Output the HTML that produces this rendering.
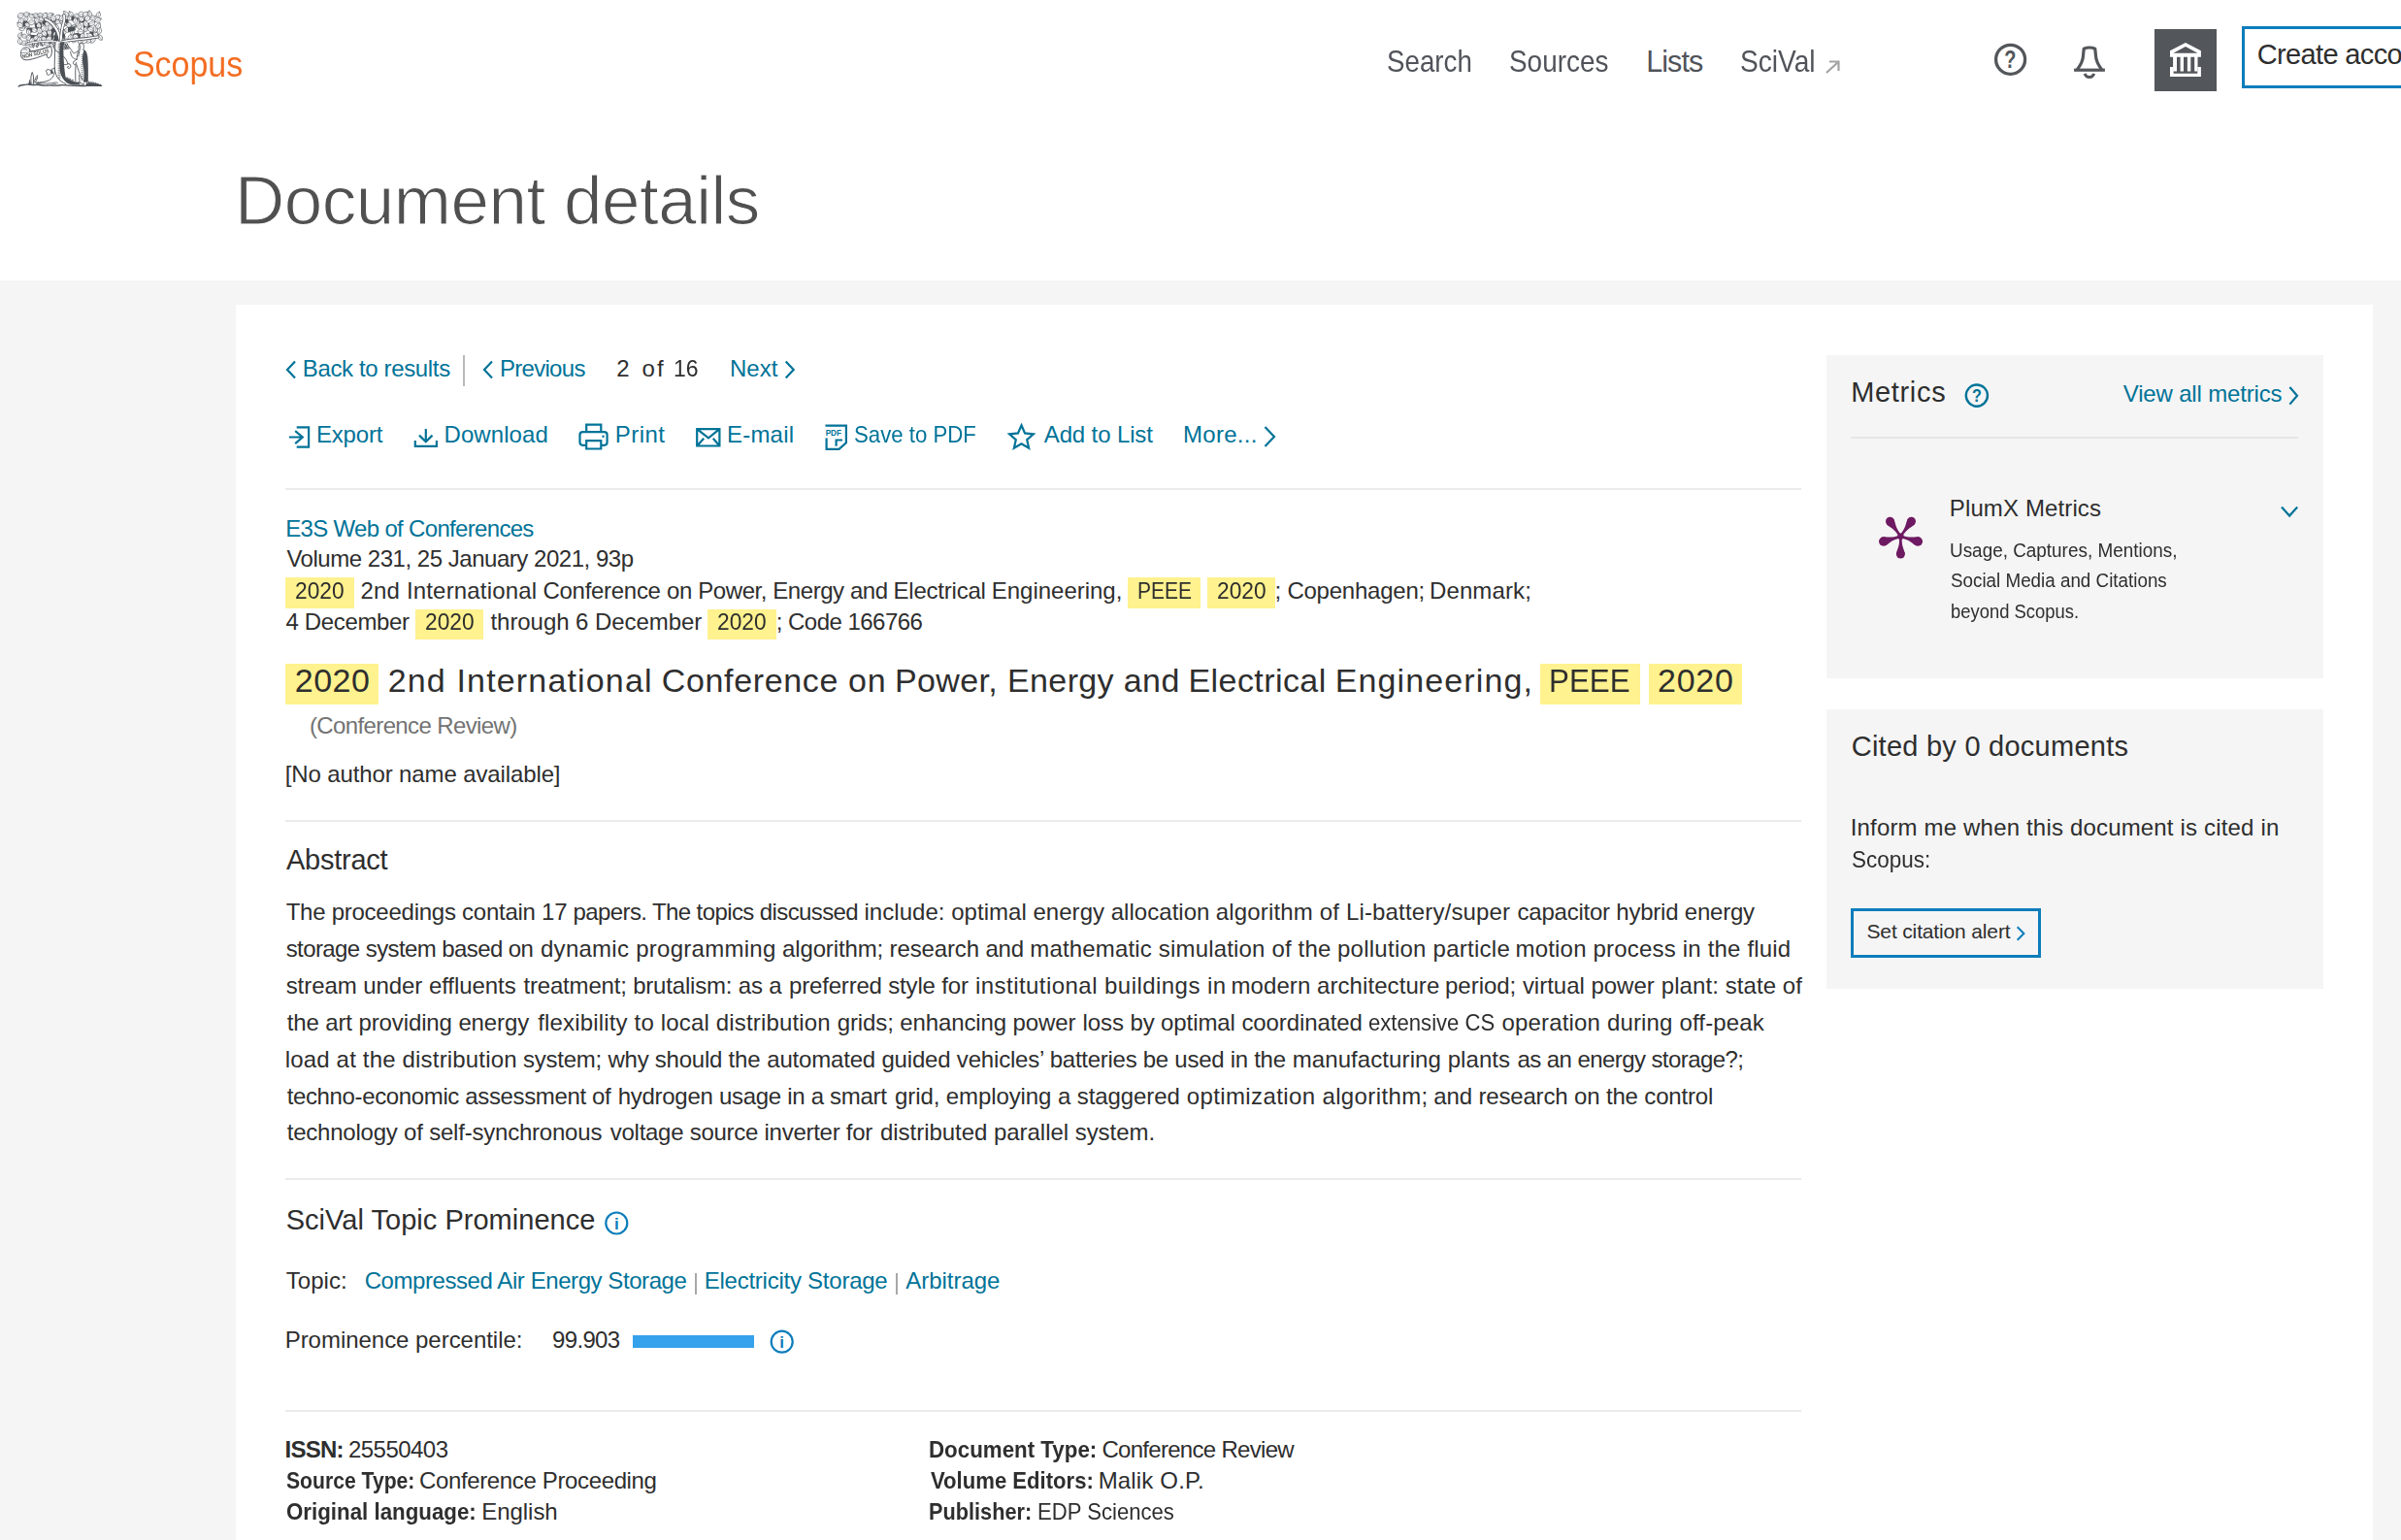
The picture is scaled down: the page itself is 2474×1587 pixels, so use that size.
<!DOCTYPE html>
<html lang="en"><head><meta charset="utf-8"><title>Scopus - Document details</title>
<style>
html,body{margin:0;padding:0}
body{width:2474px;height:1587px;overflow:hidden;background:#f5f5f5;position:relative;font-family:"Liberation Sans",sans-serif}
.r{position:absolute}
.t{position:absolute;white-space:pre;line-height:1;font-family:"Liberation Sans",sans-serif;transform-origin:0 0}
.ov{position:absolute;left:0;top:0}
</style></head><body>
<div class="r" style="left:0.00px;top:0.00px;width:2474.00px;height:289.00px;background:#fff;"></div>
<div class="r" style="left:243.00px;top:314.00px;width:2201.70px;height:1286.00px;background:#fff;"></div>
<div class="r" style="left:1882.20px;top:365.90px;width:511.80px;height:332.70px;background:#f5f5f5;"></div>
<div class="r" style="left:1882.20px;top:730.90px;width:511.80px;height:287.80px;background:#f5f5f5;"></div>
<div class="r" style="left:1907.30px;top:450.00px;width:460.70px;height:2.00px;background:#e6e6e6;"></div>
<div class="r" style="left:294.00px;top:502.75px;width:1562.00px;height:2.00px;background:#ebebeb;"></div>
<div class="r" style="left:294.00px;top:844.70px;width:1562.00px;height:2.00px;background:#ebebeb;"></div>
<div class="r" style="left:294.00px;top:1214.00px;width:1562.00px;height:2.00px;background:#ebebeb;"></div>
<div class="r" style="left:294.00px;top:1452.75px;width:1562.00px;height:2.00px;background:#ebebeb;"></div>
<div class="r" style="left:476.60px;top:366.00px;width:2.00px;height:31.50px;background:#b9b9b9;"></div>
<div class="r" style="left:294.00px;top:595.00px;width:71.00px;height:32.00px;background:#fff28f;"></div>
<div class="r" style="left:1162.00px;top:595.00px;width:74.60px;height:32.00px;background:#fff28f;"></div>
<div class="r" style="left:1243.70px;top:595.00px;width:70.00px;height:32.00px;background:#fff28f;"></div>
<div class="r" style="left:428.00px;top:627.50px;width:70.00px;height:31.50px;background:#fff28f;"></div>
<div class="r" style="left:729.25px;top:627.50px;width:70.75px;height:31.50px;background:#fff28f;"></div>
<div class="r" style="left:294.00px;top:684.00px;width:96.00px;height:41.70px;background:#fff28f;"></div>
<div class="r" style="left:1587.30px;top:684.00px;width:102.70px;height:41.70px;background:#fff28f;"></div>
<div class="r" style="left:1699.30px;top:684.00px;width:95.70px;height:41.70px;background:#fff28f;"></div>
<div class="r" style="left:716.00px;top:1311.50px;width:1.60px;height:22.00px;background:#a8a8a8;"></div>
<div class="r" style="left:923.30px;top:1311.50px;width:1.60px;height:22.00px;background:#a8a8a8;"></div>
<div class="r" style="left:652.30px;top:1376.00px;width:125.00px;height:13.30px;background:#36a2eb;"></div>
<div class="r" style="left:2220.00px;top:30.00px;width:64.00px;height:64.00px;background:#53565a;"></div>
<div class="r" style="left:2310px;top:26.9px;width:300px;height:64.1px;box-sizing:border-box;border:3.2px solid #0c7dbb;background:#fff"></div>
<div class="r" style="left:1907px;top:935.8px;width:196px;height:51px;box-sizing:border-box;border:3.2px solid #0c7dbb;"></div>
<svg class="ov" width="2474" height="1587" viewBox="0 0 2474 1587"><g stroke-linejoin="round" stroke-linecap="round">
<path d="M52 30L58 28L60.5 41L54 42Z" fill="#4b5056" stroke="#4b5056" stroke-width="1.2"/>
<path d="M64.5 30L67 31L66 40L64.5 41Z" fill="#4b5056" stroke="#4b5056" stroke-width="1.2"/>
<path d="M70 27L78 26L77 31L71 32Z" fill="#4b5056" stroke="#4b5056" stroke-width="1.2"/>
<path d="M36 24L42 23L43 29L37 30Z" fill="#4b5056" stroke="#4b5056" stroke-width="1.2"/>
<path d="M86 25L92 24L93 30L87 31Z" fill="#4b5056" stroke="#4b5056" stroke-width="1.2"/>
<path d="M30 36L38 37L37 42L31 41Z" fill="#4b5056" stroke="#4b5056" stroke-width="1.2"/>
<path d="M44 33L49 32L50 38L45 39Z" fill="#4b5056" stroke="#4b5056" stroke-width="1.2"/>
<path d="M76 35L84 34L85 39L77 40Z" fill="#4b5056" stroke="#4b5056" stroke-width="1.2"/>
<path d="M93 33L98 33L98 38L93 38Z" fill="#4b5056" stroke="#4b5056" stroke-width="1.2"/>
<path d="M24 22L28 22L28 27L24 27Z" fill="#4b5056" stroke="#4b5056" stroke-width="1.2"/>
<path d="M55 18L60 18L60 23L55 23Z" fill="#4b5056" stroke="#4b5056" stroke-width="1.2"/>
<path d="M74 17L80 17L80 21L74 21Z" fill="#4b5056" stroke="#4b5056" stroke-width="1.2"/>
<path d="M44 20L49 20L49 25L44 25Z" fill="#4b5056" stroke="#4b5056" stroke-width="1.2"/>
<path d="M82 19L87 19L87 23L82 23Z" fill="#4b5056" stroke="#4b5056" stroke-width="1.2"/>
<path d="M28 29L33 29L33 33L28 33Z" fill="#4b5056" stroke="#4b5056" stroke-width="1.2"/>
<path d="M66 20L70 20L70 25L66 25Z" fill="#4b5056" stroke="#4b5056" stroke-width="1.2"/>
<path d="M73.2 35.4Q68.0 37.3 71.2 41.8Q76.4 39.9 73.2 35.4Z" fill="#fff" stroke="#4b5056" stroke-width="0.62"/><path d="M72.7 37.0L71.6 40.5" fill="none" stroke="#4b5056" stroke-width="0.4"/>
<path d="M26.1 28.8Q21.8 25.1 19.7 30.4Q24.0 34.1 26.1 28.8Z" fill="#fff" stroke="#4b5056" stroke-width="0.62"/><path d="M24.5 29.2L21.0 30.1" fill="none" stroke="#4b5056" stroke-width="0.4"/>
<path d="M96.0 33.2Q95.6 39.4 101.6 38.0Q102.0 31.8 96.0 33.2Z" fill="#fff" stroke="#4b5056" stroke-width="0.62"/><path d="M97.4 34.4L100.5 37.0" fill="none" stroke="#4b5056" stroke-width="0.4"/>
<path d="M98.3 16.8Q93.3 13.8 92.2 19.6Q97.3 22.6 98.3 16.8Z" fill="#fff" stroke="#4b5056" stroke-width="0.62"/><path d="M96.8 17.5L93.4 19.0" fill="none" stroke="#4b5056" stroke-width="0.4"/>
<path d="M62.2 21.2Q57.5 18.5 56.6 23.9Q61.3 26.5 62.2 21.2Z" fill="#fff" stroke="#4b5056" stroke-width="0.62"/><path d="M60.8 21.8L57.7 23.3" fill="none" stroke="#4b5056" stroke-width="0.4"/>
<path d="M68.7 31.7Q63.6 29.0 62.5 34.6Q67.6 37.3 68.7 31.7Z" fill="#fff" stroke="#4b5056" stroke-width="0.62"/><path d="M67.2 32.4L63.8 34.0" fill="none" stroke="#4b5056" stroke-width="0.4"/>
<path d="M21.4 18.0Q16.3 21.8 21.8 25.1Q26.9 21.3 21.4 18.0Z" fill="#fff" stroke="#4b5056" stroke-width="0.62"/><path d="M21.5 19.8L21.7 23.7" fill="none" stroke="#4b5056" stroke-width="0.4"/>
<path d="M46.0 41.8Q39.8 40.6 41.4 46.8Q47.6 47.9 46.0 41.8Z" fill="#fff" stroke="#4b5056" stroke-width="0.62"/><path d="M44.9 43.0L42.3 45.8" fill="none" stroke="#4b5056" stroke-width="0.4"/>
<path d="M85.3 16.8Q79.3 17.7 82.8 22.6Q88.8 21.7 85.3 16.8Z" fill="#fff" stroke="#4b5056" stroke-width="0.62"/><path d="M84.7 18.2L83.3 21.4" fill="none" stroke="#4b5056" stroke-width="0.4"/>
<path d="M72.8 15.6Q67.8 17.2 70.7 21.6Q75.7 20.1 72.8 15.6Z" fill="#fff" stroke="#4b5056" stroke-width="0.62"/><path d="M72.3 17.1L71.1 20.4" fill="none" stroke="#4b5056" stroke-width="0.4"/>
<path d="M20.1 39.5Q15.6 43.6 21.2 46.1Q25.7 42.0 20.1 39.5Z" fill="#fff" stroke="#4b5056" stroke-width="0.62"/><path d="M20.4 41.2L21.0 44.8" fill="none" stroke="#4b5056" stroke-width="0.4"/>
<path d="M35.8 18.4Q34.1 24.1 40.0 24.6Q41.7 18.9 35.8 18.4Z" fill="#fff" stroke="#4b5056" stroke-width="0.62"/><path d="M36.8 19.9L39.2 23.4" fill="none" stroke="#4b5056" stroke-width="0.4"/>
<path d="M36.2 42.3Q32.9 47.1 38.7 47.9Q42.1 43.0 36.2 42.3Z" fill="#fff" stroke="#4b5056" stroke-width="0.62"/><path d="M36.9 43.7L38.2 46.8" fill="none" stroke="#4b5056" stroke-width="0.4"/>
<path d="M97.9 22.2Q92.3 20.3 91.5 26.2Q97.1 28.1 97.9 22.2Z" fill="#fff" stroke="#4b5056" stroke-width="0.62"/><path d="M96.3 23.2L92.8 25.4" fill="none" stroke="#4b5056" stroke-width="0.4"/>
<path d="M50.6 16.0Q45.9 19.8 50.4 23.8Q55.0 20.0 50.6 16.0Z" fill="#fff" stroke="#4b5056" stroke-width="0.62"/><path d="M50.5 18.0L50.4 22.2" fill="none" stroke="#4b5056" stroke-width="0.4"/>
<path d="M29.6 15.2Q30.7 20.7 35.5 18.0Q34.5 12.5 29.6 15.2Z" fill="#fff" stroke="#4b5056" stroke-width="0.62"/><path d="M31.1 15.9L34.4 17.4" fill="none" stroke="#4b5056" stroke-width="0.4"/>
<path d="M43.3 30.9Q41.2 37.2 47.8 37.3Q49.8 31.0 43.3 30.9Z" fill="#fff" stroke="#4b5056" stroke-width="0.62"/><path d="M44.4 32.5L46.9 36.0" fill="none" stroke="#4b5056" stroke-width="0.4"/>
<path d="M22.4 33.7Q16.7 34.2 19.2 39.3Q24.9 38.9 22.4 33.7Z" fill="#fff" stroke="#4b5056" stroke-width="0.62"/><path d="M21.6 35.1L19.8 38.2" fill="none" stroke="#4b5056" stroke-width="0.4"/>
<path d="M50.5 22.1Q45.1 21.9 46.6 27.1Q52.0 27.3 50.5 22.1Z" fill="#fff" stroke="#4b5056" stroke-width="0.62"/><path d="M49.5 23.3L47.4 26.1" fill="none" stroke="#4b5056" stroke-width="0.4"/>
<path d="M89.3 27.2Q84.0 28.9 87.6 33.1Q92.9 31.4 89.3 27.2Z" fill="#fff" stroke="#4b5056" stroke-width="0.62"/><path d="M88.9 28.7L87.9 31.9" fill="none" stroke="#4b5056" stroke-width="0.4"/>
<path d="M82.6 15.7Q78.2 11.9 75.4 17.0Q79.8 20.8 82.6 15.7Z" fill="#fff" stroke="#4b5056" stroke-width="0.62"/><path d="M80.8 16.0L76.8 16.7" fill="none" stroke="#4b5056" stroke-width="0.4"/>
<path d="M102.6 12.3Q97.2 13.5 100.2 18.2Q105.6 17.0 102.6 12.3Z" fill="#fff" stroke="#4b5056" stroke-width="0.62"/><path d="M102.0 13.8L100.7 17.0" fill="none" stroke="#4b5056" stroke-width="0.4"/>
<path d="M84.1 38.4Q77.9 40.1 81.4 45.5Q87.6 43.8 84.1 38.4Z" fill="#fff" stroke="#4b5056" stroke-width="0.62"/><path d="M83.4 40.2L81.9 44.1" fill="none" stroke="#4b5056" stroke-width="0.4"/>
<path d="M49.4 30.1Q46.6 35.3 52.4 36.5Q55.2 31.3 49.4 30.1Z" fill="#fff" stroke="#4b5056" stroke-width="0.62"/><path d="M50.1 31.7L51.8 35.2" fill="none" stroke="#4b5056" stroke-width="0.4"/>
<path d="M24.3 14.1Q18.4 11.5 18.2 18.0Q24.1 20.5 24.3 14.1Z" fill="#fff" stroke="#4b5056" stroke-width="0.62"/><path d="M22.8 15.1L19.4 17.2" fill="none" stroke="#4b5056" stroke-width="0.4"/>
<path d="M39.2 36.7Q33.8 36.1 34.5 41.5Q39.9 42.0 39.2 36.7Z" fill="#fff" stroke="#4b5056" stroke-width="0.62"/><path d="M38.0 37.9L35.4 40.5" fill="none" stroke="#4b5056" stroke-width="0.4"/>
<path d="M67.0 37.9Q61.7 35.8 61.1 41.5Q66.4 43.6 67.0 37.9Z" fill="#fff" stroke="#4b5056" stroke-width="0.62"/><path d="M65.5 38.8L62.3 40.8" fill="none" stroke="#4b5056" stroke-width="0.4"/>
<path d="M31.2 36.0Q25.1 36.1 27.7 41.7Q33.8 41.5 31.2 36.0Z" fill="#fff" stroke="#4b5056" stroke-width="0.62"/><path d="M30.4 37.4L28.4 40.5" fill="none" stroke="#4b5056" stroke-width="0.4"/>
<path d="M25.8 23.5Q25.1 28.7 30.3 27.7Q31.0 22.4 25.8 23.5Z" fill="#fff" stroke="#4b5056" stroke-width="0.62"/><path d="M26.9 24.5L29.4 26.8" fill="none" stroke="#4b5056" stroke-width="0.4"/>
<path d="M52.0 43.6Q47.4 39.9 45.4 45.5Q50.0 49.2 52.0 43.6Z" fill="#fff" stroke="#4b5056" stroke-width="0.62"/><path d="M50.4 44.1L46.7 45.1" fill="none" stroke="#4b5056" stroke-width="0.4"/>
<path d="M62.3 24.0Q64.8 29.6 69.2 25.3Q66.7 19.8 62.3 24.0Z" fill="#fff" stroke="#4b5056" stroke-width="0.62"/><path d="M64.0 24.3L67.8 25.1" fill="none" stroke="#4b5056" stroke-width="0.4"/>
<path d="M28.0 16.5Q22.9 17.9 25.9 22.2Q31.0 20.8 28.0 16.5Z" fill="#fff" stroke="#4b5056" stroke-width="0.62"/><path d="M27.5 17.9L26.4 21.1" fill="none" stroke="#4b5056" stroke-width="0.4"/>
<path d="M103.2 28.2Q97.9 30.9 101.6 35.5Q106.9 32.8 103.2 28.2Z" fill="#fff" stroke="#4b5056" stroke-width="0.62"/><path d="M102.8 30.0L101.9 34.0" fill="none" stroke="#4b5056" stroke-width="0.4"/>
<path d="M57.0 24.6Q54.3 29.7 59.7 31.8Q62.3 26.7 57.0 24.6Z" fill="#fff" stroke="#4b5056" stroke-width="0.62"/><path d="M57.6 26.4L59.1 30.3" fill="none" stroke="#4b5056" stroke-width="0.4"/>
<path d="M28.7 43.3Q23.9 39.9 21.6 45.3Q26.3 48.6 28.7 43.3Z" fill="#fff" stroke="#4b5056" stroke-width="0.62"/><path d="M26.9 43.8L23.0 44.9" fill="none" stroke="#4b5056" stroke-width="0.4"/>
<path d="M92.2 15.9Q85.8 15.5 88.0 21.6Q94.4 22.0 92.2 15.9Z" fill="#fff" stroke="#4b5056" stroke-width="0.62"/><path d="M91.2 17.3L88.8 20.5" fill="none" stroke="#4b5056" stroke-width="0.4"/>
<path d="M34.5 38.6Q28.6 39.9 31.3 45.3Q37.2 44.0 34.5 38.6Z" fill="#fff" stroke="#4b5056" stroke-width="0.62"/><path d="M33.7 40.3L31.9 44.0" fill="none" stroke="#4b5056" stroke-width="0.4"/>
<path d="M46.1 25.6Q40.1 27.7 43.8 32.9Q49.8 30.8 46.1 25.6Z" fill="#fff" stroke="#4b5056" stroke-width="0.62"/><path d="M45.6 27.4L44.3 31.4" fill="none" stroke="#4b5056" stroke-width="0.4"/>
<path d="M53.0 37.7Q47.1 36.3 47.9 42.4Q53.9 43.8 53.0 37.7Z" fill="#fff" stroke="#4b5056" stroke-width="0.62"/><path d="M51.8 38.9L49.0 41.4" fill="none" stroke="#4b5056" stroke-width="0.4"/>
<path d="M86.6 33.9Q80.9 34.9 83.1 40.2Q88.8 39.2 86.6 33.9Z" fill="#fff" stroke="#4b5056" stroke-width="0.62"/><path d="M85.7 35.5L83.8 39.0" fill="none" stroke="#4b5056" stroke-width="0.4"/>
<path d="M73.8 30.2Q70.3 34.2 75.1 36.5Q78.5 32.5 73.8 30.2Z" fill="#fff" stroke="#4b5056" stroke-width="0.62"/><path d="M74.1 31.8L74.8 35.3" fill="none" stroke="#4b5056" stroke-width="0.4"/>
<path d="M38.5 35.1Q39.2 41.3 44.1 37.5Q43.4 31.4 38.5 35.1Z" fill="#fff" stroke="#4b5056" stroke-width="0.62"/><path d="M39.9 35.7L43.0 37.0" fill="none" stroke="#4b5056" stroke-width="0.4"/>
<path d="M89.7 34.5Q89.6 40.9 95.7 39.2Q95.8 32.9 89.7 34.5Z" fill="#fff" stroke="#4b5056" stroke-width="0.62"/><path d="M91.2 35.7L94.5 38.3" fill="none" stroke="#4b5056" stroke-width="0.4"/>
<path d="M97.9 26.2Q93.6 30.5 98.7 33.8Q103.0 29.5 97.9 26.2Z" fill="#fff" stroke="#4b5056" stroke-width="0.62"/><path d="M98.1 28.1L98.5 32.3" fill="none" stroke="#4b5056" stroke-width="0.4"/>
<path d="M75.7 35.6Q74.1 41.5 80.1 40.2Q81.7 34.3 75.7 35.6Z" fill="#fff" stroke="#4b5056" stroke-width="0.62"/><path d="M76.8 36.7L79.2 39.3" fill="none" stroke="#4b5056" stroke-width="0.4"/>
<path d="M78.8 26.5Q73.5 24.0 72.7 29.8Q78.0 32.4 78.8 26.5Z" fill="#fff" stroke="#4b5056" stroke-width="0.62"/><path d="M77.3 27.4L73.9 29.2" fill="none" stroke="#4b5056" stroke-width="0.4"/>
<path d="M56.6 32.6Q52.3 36.4 57.6 38.7Q61.9 34.8 56.6 32.6Z" fill="#fff" stroke="#4b5056" stroke-width="0.62"/><path d="M56.9 34.1L57.4 37.5" fill="none" stroke="#4b5056" stroke-width="0.4"/>
<path d="M55.1 14.2Q49.7 11.4 48.0 17.2Q53.4 20.0 55.1 14.2Z" fill="#fff" stroke="#4b5056" stroke-width="0.62"/><path d="M53.3 14.9L49.4 16.6" fill="none" stroke="#4b5056" stroke-width="0.4"/>
<path d="M67.9 25.8Q70.9 31.0 74.1 26.0Q71.2 20.8 67.9 25.8Z" fill="#fff" stroke="#4b5056" stroke-width="0.62"/><path d="M69.5 25.9L72.9 26.0" fill="none" stroke="#4b5056" stroke-width="0.4"/>
<path d="M29.0 29.8Q24.9 33.5 29.9 36.0Q34.0 32.3 29.0 29.8Z" fill="#fff" stroke="#4b5056" stroke-width="0.62"/><path d="M29.2 31.3L29.7 34.8" fill="none" stroke="#4b5056" stroke-width="0.4"/>
<path d="M53.3 25.4Q47.7 26.5 50.1 31.7Q55.7 30.5 53.3 25.4Z" fill="#fff" stroke="#4b5056" stroke-width="0.62"/><path d="M52.5 26.9L50.7 30.4" fill="none" stroke="#4b5056" stroke-width="0.4"/>
<path d="M102.9 23.8Q96.9 24.5 99.5 29.9Q105.5 29.2 102.9 23.8Z" fill="#fff" stroke="#4b5056" stroke-width="0.62"/><path d="M102.1 25.3L100.2 28.7" fill="none" stroke="#4b5056" stroke-width="0.4"/>
<path d="M53.6 22.0Q51.1 26.7 56.3 27.7Q58.9 23.0 53.6 22.0Z" fill="#fff" stroke="#4b5056" stroke-width="0.62"/><path d="M54.3 23.5L55.8 26.6" fill="none" stroke="#4b5056" stroke-width="0.4"/>
<path d="M40.2 17.7Q40.0 23.3 45.3 21.4Q45.5 15.8 40.2 17.7Z" fill="#fff" stroke="#4b5056" stroke-width="0.62"/><path d="M41.4 18.6L44.2 20.6" fill="none" stroke="#4b5056" stroke-width="0.4"/>
<path d="M22.1 36.1Q23.7 41.2 28.2 38.3Q26.6 33.2 22.1 36.1Z" fill="#fff" stroke="#4b5056" stroke-width="0.62"/><path d="M23.6 36.6L27.0 37.8" fill="none" stroke="#4b5056" stroke-width="0.4"/>
<path d="M65.3 15.6Q59.1 16.3 61.5 22.1Q67.7 21.4 65.3 15.6Z" fill="#fff" stroke="#4b5056" stroke-width="0.62"/><path d="M64.4 17.2L62.3 20.8" fill="none" stroke="#4b5056" stroke-width="0.4"/>
<path d="M39.8 23.1Q35.2 26.8 40.2 30.0Q44.7 26.3 39.8 23.1Z" fill="#fff" stroke="#4b5056" stroke-width="0.62"/><path d="M39.9 24.8L40.1 28.6" fill="none" stroke="#4b5056" stroke-width="0.4"/>
<path d="M89.8 29.8Q92.8 35.1 96.7 30.4Q93.7 25.2 89.8 29.8Z" fill="#fff" stroke="#4b5056" stroke-width="0.62"/><path d="M91.6 30.0L95.4 30.3" fill="none" stroke="#4b5056" stroke-width="0.4"/>
<path d="M81.5 23.7Q77.2 27.9 82.4 31.1Q86.6 26.8 81.5 23.7Z" fill="#fff" stroke="#4b5056" stroke-width="0.62"/><path d="M81.7 25.5L82.2 29.6" fill="none" stroke="#4b5056" stroke-width="0.4"/>
<path d="M33.6 15.0Q36.4 20.1 41.0 16.6Q38.2 11.5 33.6 15.0Z" fill="#fff" stroke="#4b5056" stroke-width="0.62"/><path d="M35.5 15.4L39.5 16.3" fill="none" stroke="#4b5056" stroke-width="0.4"/>
<path d="M86.8 13.7Q82.3 9.4 80.4 15.3Q84.9 19.6 86.8 13.7Z" fill="#fff" stroke="#4b5056" stroke-width="0.62"/><path d="M85.2 14.1L81.7 15.0" fill="none" stroke="#4b5056" stroke-width="0.4"/>
<path d="M61.2 15.5Q55.3 14.2 57.0 20.0Q63.0 21.3 61.2 15.5Z" fill="#fff" stroke="#4b5056" stroke-width="0.62"/><path d="M60.2 16.6L57.9 19.1" fill="none" stroke="#4b5056" stroke-width="0.4"/>
<path d="M56.3 44.4Q51.4 42.6 51.2 47.9Q56.2 49.7 56.3 44.4Z" fill="#fff" stroke="#4b5056" stroke-width="0.62"/><path d="M55.1 45.3L52.3 47.2" fill="none" stroke="#4b5056" stroke-width="0.4"/>
<path d="M48.0 13.3Q41.6 13.1 43.8 19.1Q50.1 19.2 48.0 13.3Z" fill="#fff" stroke="#4b5056" stroke-width="0.62"/><path d="M46.9 14.7L44.6 17.9" fill="none" stroke="#4b5056" stroke-width="0.4"/>
<path d="M32.8 29.3Q32.6 35.3 38.0 32.8Q38.2 26.7 32.8 29.3Z" fill="#fff" stroke="#4b5056" stroke-width="0.62"/><path d="M34.1 30.2L37.0 32.1" fill="none" stroke="#4b5056" stroke-width="0.4"/>
<path d="M87.0 21.1Q84.1 26.5 90.0 28.3Q92.9 22.8 87.0 21.1Z" fill="#fff" stroke="#4b5056" stroke-width="0.62"/><path d="M87.8 22.9L89.4 26.8" fill="none" stroke="#4b5056" stroke-width="0.4"/>
<path d="M86.3 32.2Q82.3 27.2 79.6 33.0Q83.6 37.9 86.3 32.2Z" fill="#fff" stroke="#4b5056" stroke-width="0.62"/><path d="M84.6 32.4L80.9 32.8" fill="none" stroke="#4b5056" stroke-width="0.4"/>
<path d="M104.2 19.1Q98.8 16.0 97.3 22.1Q102.7 25.1 104.2 19.1Z" fill="#fff" stroke="#4b5056" stroke-width="0.62"/><path d="M102.5 19.8L98.7 21.5" fill="none" stroke="#4b5056" stroke-width="0.4"/>
<path d="M36.2 22.3Q31.2 18.1 28.8 24.1Q33.8 28.3 36.2 22.3Z" fill="#fff" stroke="#4b5056" stroke-width="0.62"/><path d="M34.4 22.7L30.3 23.8" fill="none" stroke="#4b5056" stroke-width="0.4"/>
<path d="M77.2 17.7Q73.1 22.2 78.2 25.4Q82.3 20.9 77.2 17.7Z" fill="#fff" stroke="#4b5056" stroke-width="0.62"/><path d="M77.4 19.6L78.0 23.9" fill="none" stroke="#4b5056" stroke-width="0.4"/>
<path d="M94.2 39.9Q88.6 37.9 88.5 43.8Q94.0 45.8 94.2 39.9Z" fill="#fff" stroke="#4b5056" stroke-width="0.62"/><path d="M92.8 40.9L89.6 43.0" fill="none" stroke="#4b5056" stroke-width="0.4"/>
<path d="M101.0 35.7Q99.4 41.2 105.2 41.4Q106.8 35.9 101.0 35.7Z" fill="#fff" stroke="#4b5056" stroke-width="0.62"/><path d="M102.1 37.1L104.4 40.3" fill="none" stroke="#4b5056" stroke-width="0.4"/>
<path d="M38.6 14.9Q41.1 19.5 44.7 15.8Q42.2 11.2 38.6 14.9Z" fill="#fff" stroke="#4b5056" stroke-width="0.62"/><path d="M40.1 15.1L43.5 15.6" fill="none" stroke="#4b5056" stroke-width="0.4"/>
<path d="M56.9 37.0Q51.8 40.1 56.4 44.0Q61.6 40.8 56.9 37.0Z" fill="#fff" stroke="#4b5056" stroke-width="0.62"/><path d="M56.8 38.7L56.5 42.6" fill="none" stroke="#4b5056" stroke-width="0.4"/>
<path d="M65.9 11.6Q64.5 17.2 70.3 17.5Q71.7 11.9 65.9 11.6Z" fill="#fff" stroke="#4b5056" stroke-width="0.62"/><path d="M67.0 13.1L69.4 16.3" fill="none" stroke="#4b5056" stroke-width="0.4"/>
<path d="M90.4 12.3Q84.6 11.3 85.6 17.1Q91.3 18.1 90.4 12.3Z" fill="#fff" stroke="#4b5056" stroke-width="0.62"/><path d="M89.2 13.5L86.5 16.1" fill="none" stroke="#4b5056" stroke-width="0.4"/>
<path d="M35.7 45.1Q30.7 42.0 29.8 47.8Q34.8 51.0 35.7 45.1Z" fill="#fff" stroke="#4b5056" stroke-width="0.62"/><path d="M34.2 45.8L31.0 47.3" fill="none" stroke="#4b5056" stroke-width="0.4"/>
<path d="M66.2 40.0Q66.2 45.5 71.6 44.5Q71.6 39.0 66.2 40.0Z" fill="#fff" stroke="#4b5056" stroke-width="0.62"/><path d="M67.5 41.1L70.5 43.6" fill="none" stroke="#4b5056" stroke-width="0.4"/>
<path d="M30.2 13.8Q25.8 10.1 24.2 15.7Q28.6 19.4 30.2 13.8Z" fill="#fff" stroke="#4b5056" stroke-width="0.62"/><path d="M28.7 14.3L25.4 15.3" fill="none" stroke="#4b5056" stroke-width="0.4"/>
<path d="M39.3 28.3Q36.6 33.5 42.3 34.9Q45.0 29.7 39.3 28.3Z" fill="#fff" stroke="#4b5056" stroke-width="0.62"/><path d="M40.0 29.9L41.7 33.6" fill="none" stroke="#4b5056" stroke-width="0.4"/>
<path d="M98.3 39.4Q92.8 38.6 93.2 44.1Q98.6 44.9 98.3 39.4Z" fill="#fff" stroke="#4b5056" stroke-width="0.62"/><path d="M97.0 40.5L94.2 43.1" fill="none" stroke="#4b5056" stroke-width="0.4"/>
<path d="M43.1 37.6Q41.6 43.1 47.2 42.4Q48.7 36.9 43.1 37.6Z" fill="#fff" stroke="#4b5056" stroke-width="0.62"/><path d="M44.2 38.8L46.4 41.4" fill="none" stroke="#4b5056" stroke-width="0.4"/>
<path d="M40.7 37.8Q35.5 41.2 40.2 45.2Q45.3 41.8 40.7 37.8Z" fill="#fff" stroke="#4b5056" stroke-width="0.62"/><path d="M40.5 39.7L40.3 43.7" fill="none" stroke="#4b5056" stroke-width="0.4"/>
<path d="M73.4 30.6Q69.3 25.8 66.2 31.2Q70.2 36.0 73.4 30.6Z" fill="#fff" stroke="#4b5056" stroke-width="0.62"/><path d="M71.6 30.7L67.6 31.1" fill="none" stroke="#4b5056" stroke-width="0.4"/>
<path d="M71.3 11.9Q69.3 17.0 74.8 17.1Q76.8 12.0 71.3 11.9Z" fill="#fff" stroke="#4b5056" stroke-width="0.62"/><path d="M72.2 13.2L74.1 16.1" fill="none" stroke="#4b5056" stroke-width="0.4"/>
<path d="M57.3 31.9Q59.8 37.6 64.2 33.2Q61.7 27.5 57.3 31.9Z" fill="#fff" stroke="#4b5056" stroke-width="0.62"/><path d="M59.0 32.2L62.9 32.9" fill="none" stroke="#4b5056" stroke-width="0.4"/>
<path d="M72.7 40.5Q73.8 46.2 78.5 42.7Q77.4 36.9 72.7 40.5Z" fill="#fff" stroke="#4b5056" stroke-width="0.62"/><path d="M74.2 41.0L77.3 42.2" fill="none" stroke="#4b5056" stroke-width="0.4"/>
<path d="M18.1 23.3Q16.8 29.6 23.2 28.6Q24.4 22.2 18.1 23.3Z" fill="#fff" stroke="#4b5056" stroke-width="0.62"/><path d="M19.3 24.6L22.2 27.5" fill="none" stroke="#4b5056" stroke-width="0.4"/>
<path d="M90.1 40.0Q84.3 38.0 83.9 44.2Q89.8 46.1 90.1 40.0Z" fill="#fff" stroke="#4b5056" stroke-width="0.62"/><path d="M88.6 41.0L85.2 43.3" fill="none" stroke="#4b5056" stroke-width="0.4"/>
<path d="M92.0 11.1Q88.6 15.4 93.5 17.9Q96.9 13.6 92.0 11.1Z" fill="#fff" stroke="#4b5056" stroke-width="0.62"/><path d="M92.4 12.8L93.2 16.6" fill="none" stroke="#4b5056" stroke-width="0.4"/>
<path d="M53.6 15.2Q50.4 20.5 56.3 22.3Q59.5 17.0 53.6 15.2Z" fill="#fff" stroke="#4b5056" stroke-width="0.62"/><path d="M54.2 17.0L55.8 20.9" fill="none" stroke="#4b5056" stroke-width="0.4"/>
<path d="M62 46C62 38 60 32 56 27C53 23 50 21 47 20" fill="none" stroke="#4b5056" stroke-width="3.6"/><path d="M62 46C62 38 60 32 56 27C53 23 50 21 47 20" fill="none" stroke="#fff" stroke-width="2.2"/>
<path d="M62.5 44C63 36 64 28 66 22C66.5 20 66.5 18 66 16" fill="none" stroke="#4b5056" stroke-width="3.4"/><path d="M62.5 44C63 36 64 28 66 22C66.5 20 66.5 18 66 16" fill="none" stroke="#fff" stroke-width="2.0"/>
<path d="M64 43C72 41 86 40.5 101 38" fill="none" stroke="#4b5056" stroke-width="3.0"/><path d="M64 43C72 41 86 40.5 101 38" fill="none" stroke="#fff" stroke-width="1.6"/>
<path d="M58 42C50 42 38 42 27 45.5" fill="none" stroke="#4b5056" stroke-width="2.7"/><path d="M58 42C50 42 38 42 27 45.5" fill="none" stroke="#fff" stroke-width="1.3"/>
<path d="M57.5 32L60.5 42L55 42Z" fill="#4b5056"/>
<path d="M64.5 30L67 38L64.5 41Z" fill="#4b5056"/>
<path d="M70 28L78 27L76 32L70 33Z" fill="#4b5056"/>
<path d="M57.5 43C56.5 50 56.5 58 56.2 67C56.3 72 56.5 76 58 79C60.5 83 64 85.5 67.6 86.5L74 87L74 44Z" fill="#fff"/>
<path d="M57 44C56.3 52 56.6 60 56.2 67.5C56.2 72 57 76 59 79.5C61.5 83 64.5 85.3 67.8 86.4" fill="none" stroke="#4b5056" stroke-width="0.9"/>
<path d="M61.8 43.5C61.1 52 61.2 62 61.4 70C61.8 76 63.6 80 66.4 83C69 86 72 87.2 75 87.4L83 87.5L82 84.4L78 84.4L74 83L70 81.2L67.8 80.6C66.2 72 65.4 60 65.4 52C65.5 48 65.9 45.5 66.6 43Z" fill="#4b5056"/>
<path d="M62 45.0L60 45.2M62 46.7L60 46.9M62 48.4L60 48.6M62 50.1L60 50.3M62 51.8L60 52.0M62 53.5L60 53.7M62 55.2L60 55.4M62 56.9L60 57.1M62 58.6L60 58.8M62 60.3L60 60.5M62 62.0L60 62.2M62 63.7L60 63.9M62 65.4L60 65.6M62 67.1L60 67.3M62 68.8L60 69.0M62 70.5L60 70.7M62 72.2L60 72.4M62 73.9L60 74.1M62 75.6L60 75.8M62 77.3L60 77.5M62 79.0L60 79.2M62 80.7L60 80.9" fill="none" stroke="#4b5056" stroke-width="0.6"/>
<path d="M67.5 81L68 78.5L68.8 81L69.5 79L70.2 81.5L71 79.5L71.8 82L72.8 80.5L73.5 82.5L75 81.5L76 83Z" fill="#4b5056"/>
<path d="M55.5 46.5C55 49 56 51 58 52.5C62 55 65 57 67 60C69 62.5 69.5 64.5 69.8 66C71.5 65 73 66.5 72.8 68.5C72.5 70.5 70.5 71 69.6 69.8C69.2 69 69.8 68.2 70.6 68.6" fill="none" stroke="#4b5056" stroke-width="0.9"/>
<path d="M66 66.5C67.5 66.8 68.8 66.6 69.8 66" fill="none" stroke="#4b5056" stroke-width="0.8"/>
<path d="M50 44.5C52 44 54.5 44.5 55.5 46.5" fill="none" stroke="#4b5056" stroke-width="0.9"/>
<path d="M56.4 70C57 76 55 80 50.5 82.8C46.5 84.5 41 85 37 85.3" fill="none" stroke="#4b5056" stroke-width="0.9"/>
<path d="M55.8 70.5C54 71 52.5 71.5 52 72.5C50 71 47.5 71.5 47.3 73.5C48.5 74 48.6 75 48.2 76.5C49.5 78 51.5 77 52.5 75.5C53.5 76.5 54.5 76 54.6 74.5" fill="#fff" stroke="#4b5056" stroke-width="0.9"/>
<path d="M52 72.5L54.2 72L54.5 76L52.4 75.6Z" fill="#4b5056"/>
<path d="M21.6 54.5C21.2 51.5 23.5 49 27 48.8C29.5 48.8 30.8 50.5 30.8 53C38 52.5 45 50 50.4 47.9C52.5 48 53.6 50 53.4 53C53.2 56.5 52.5 58.5 50.8 59.6C49.5 60.3 48.3 59.3 48.4 57.8L48.5 55.8C42 58 35 61 28.5 61.8C25 62 22.3 61 21.8 58.5Z" fill="#fff" stroke="#4b5056" stroke-width="0.95"/>
<path d="M22.5 54.5C29 54.5 40 52 50.6 48.6" fill="none" stroke="#4b5056" stroke-width="0.6"/>
<path d="M24.5 51.2C25.5 50.3 27.5 50.4 28 51.6M30.8 53L30.8 50.5" fill="none" stroke="#4b5056" stroke-width="0.8"/>
<g style="filter:grayscale(1)"><text x="23.4" y="60.2" font-family="Liberation Sans,sans-serif" font-size="5.6" font-weight="bold" fill="#4b5056" opacity="0.999" transform="rotate(-12.5 23.4 60.2)" textLength="28.2" lengthAdjust="spacingAndGlyphs">NON SOLUS</text></g>
<path d="M33.3 45.2Q31.9 48.0 34.7 49.2Q36.1 46.4 33.3 45.2Z" fill="#fff" stroke="#4b5056" stroke-width="0.8"/><path d="M33.6 46.2L34.4 48.4" fill="none" stroke="#4b5056" stroke-width="0.4"/>
<path d="M38.9 44.9Q36.3 46.6 38.1 49.1Q40.7 47.4 38.9 44.9Z" fill="#fff" stroke="#4b5056" stroke-width="0.8"/><path d="M38.7 46.0L38.3 48.2" fill="none" stroke="#4b5056" stroke-width="0.4"/>
<path d="M42.0 44.3Q41.3 47.0 44.0 47.7Q44.7 45.0 42.0 44.3Z" fill="#fff" stroke="#4b5056" stroke-width="0.8"/><path d="M42.5 45.1L43.6 47.0" fill="none" stroke="#4b5056" stroke-width="0.4"/>
<path d="M86.6 51C88.2 51.5 89.6 54 90.2 58C90.9 64 91 74 90.8 84.8L86 84.8C87 78 86.6 72 85.4 66C84.6 62 84.8 56 86.6 51Z" fill="#4b5056"/>
<path d="M85.6 56.0L83.8 56.7M85.7 58.0L83.9 58.7M85.8 60.0L84.0 60.7M85.8 62.0L84.0 62.7M85.9 64.0L84.1 64.7M85.5 66.0L83.7 66.7M85.5 68.0L83.7 68.7M85.6 70.0L83.8 70.7M85.7 72.0L83.9 72.7M85.7 74.0L83.9 74.7M85.8 76.0L84.0 76.7M85.9 78.0L84.1 78.7M85.9 80.0L84.1 80.7M86.0 82.0L84.2 82.7" fill="none" stroke="#4b5056" stroke-width="0.6"/>
<g fill="none" stroke="#4b5056" stroke-width="0.85">
<path d="M81.6 46.4C82 44 85 43.6 86 45.8C86.8 47.8 86.4 50 85.6 51.6"/>
<path d="M81.6 46.4C81 47.6 81.4 48.6 80.6 49.2C81.6 49.6 81.4 50.8 80.6 52.4C80 54.6 79.6 57 79.2 59.4"/>
<path d="M83 47C82.4 50 81.6 54 80.8 58"/>
<path d="M80 52.8C78 54 76.4 55.4 75.6 54.6C74 52.4 72.6 50 71.4 48.6"/>
<path d="M72.6 53.5C73 56 73.8 58.5 75.6 60C77 61 78.6 61.4 79.6 61.2"/>
<path d="M79.4 60C78.6 61.6 78 62.6 77 62.8C75.4 63 74.8 65 76 66.2C77.2 67 78.6 66.2 78.6 64.6"/>
<path d="M78.6 66C80 70 82 76 84.6 82"/>
<path d="M78 67C77.6 72 77.6 78 77.8 83.6M81.6 77.5C81.6 80 81.8 82 82 84"/>
<path d="M82 85.4C83 86 85.6 86 87 86.6C86.4 88 83.4 88.2 81.6 87.6C81 87 81.2 86 82 85.4Z" fill="#fff"/>
</g>
<g fill="#fff" stroke="#4b5056" stroke-width="0.7">
<circle cx="66.8" cy="46.2" r="1.05"/>
<circle cx="68.6" cy="45.6" r="1.05"/>
<circle cx="67.4" cy="48" r="1.05"/>
<circle cx="69.4" cy="47.6" r="1.05"/>
<circle cx="68.2" cy="49.8" r="1.05"/>
<circle cx="70.2" cy="49.4" r="1.05"/>
<circle cx="66.4" cy="49.8" r="1.05"/>
</g>
<path d="M67 45L69.6 50M69.8 45.4L66.6 50.2" fill="none" stroke="#4b5056" stroke-width="0.6"/>
<path d="M19.2 89C21 87 24 87.8 27 87.2C30 86.2 33 88 36 87.6C40 87 44 88.4 48 88C52 87.2 56 88.8 60 88C64 87 68 88 72 88.2C78 88.6 84 89 90 88.4C95 88 100 87.4 104.6 88.4" fill="none" stroke="#4b5056" stroke-width="1.3"/>
<path d="M37 86C42 85.4 47 86.4 52 85.8C54 85.6 56 86.2 58 87" fill="none" stroke="#4b5056" stroke-width="0.8"/>
<path d="M54 85.8C56 84.6 58.6 84.6 59.6 85.6" fill="none" stroke="#4b5056" stroke-width="0.8"/>
<path d="M88 88.8L89.6 84.6L90.4 86L91.3 83.2L92.2 85.6L93.1 83.4L94 85.8L95 83.6L95.9 86L96.9 84L97.8 86.2L98.9 84.6L99.8 86.6L101 85.4L102 87L103.2 86.4L104.6 88.2L104.6 89Z" fill="#4b5056"/>
<path d="M29 87.4L30.6 81.6L32.2 87.4Z" fill="#4b5056"/>
<path d="M32.2 86.5C31.4 82 31.8 77.5 33.2 74.4C34.8 77.5 35 82 34.2 86.5" fill="#fff" stroke="#4b5056" stroke-width="0.9"/>
<path d="M34.6 86.8L33.6 81.2L35.6 86.8Z" fill="#4b5056"/>
<path d="M35.6 84.5C36 81.5 37 79 38.6 77.6C38.8 80 38 82.5 36.6 84.8" fill="#fff" stroke="#4b5056" stroke-width="0.8"/>
<path d="M36 82L38.4 80.6M38.5 86.4L39 84.6L39.6 86.4L40.2 85L40.8 86.6L42 85.6" fill="none" stroke="#4b5056" stroke-width="0.7"/>
</g>
<path d="M304 372.5L296 381.0L304 389.5" fill="none" stroke="#007398" stroke-width="2.2"/>
<path d="M507 372.5L499 381.0L507 389.5" fill="none" stroke="#007398" stroke-width="2.2"/>
<path d="M809.7 372.5L817.7 381.0L809.7 389.5" fill="none" stroke="#007398" stroke-width="2.2"/>
<path d="M1303.5 440L1313 450.0L1303.5 460" fill="none" stroke="#007398" stroke-width="2.2"/>
<path d="M2359.4 399L2367 407.8L2359.4 416.6" fill="none" stroke="#007398" stroke-width="2.2"/>
<path d="M2351 522.5L2359.1 531.5L2367.2 522.5" fill="none" stroke="#007398" stroke-width="2.2"/>
<path d="M2078.7 955.3L2085.4 962.05L2078.7 968.8" fill="none" stroke="#0c7dbb" stroke-width="2"/>
<path d="M1882 75L1894.5 63.5M1885 63.5L1894.5 63.5L1894.5 73" fill="none" stroke="#a3a3a3" stroke-width="2.2"/>
<circle cx="2071.6" cy="61.3" r="15" fill="none" stroke="#53565a" stroke-width="3.3"/>
<text x="0" y="70" text-anchor="middle" transform="translate(2071.4 0) scale(0.78 1)" font-family="Liberation Sans,sans-serif" font-weight="bold" font-size="25.5" fill="#53565a">?</text>
<path d="M2138.7 72.2L2167.3 72.2" fill="none" stroke="#53565a" stroke-width="3.2" stroke-linecap="square"/>
<path d="M2140.4 71.8C2144.2 66.5 2146.4 62.5 2146.5 57.5L2147.2 50.3Q2153 47.7 2158.8 50.3L2159.5 57.5C2159.6 62.5 2161.8 66.5 2165.6 71.8" fill="none" stroke="#53565a" stroke-width="3.2" stroke-linejoin="round"/>
<path d="M2148.2 75.8C2149.5 80.7 2156.3 80.7 2157.6 75.8" fill="none" stroke="#53565a" stroke-width="3"/>
<path fill-rule="evenodd" fill="#fff" d="M2236 52.2L2252 43.9L2267.9 52.2L2267.9 58.7L2236 58.7Z M2239.4 54.8L2252 48L2264.5 54.8Z"/>
<rect x="2239.1" y="58" width="3.9" height="15.5" fill="#fff"/>
<rect x="2246.6" y="58" width="3.4" height="15.5" fill="#fff"/>
<rect x="2253.9" y="58" width="3.4" height="15.5" fill="#fff"/>
<rect x="2261.2" y="58" width="3.3" height="15.5" fill="#fff"/>
<path fill-rule="evenodd" fill="#fff" d="M2236 69.1L2239.5 69.1L2239.5 73L2264.5 73L2264.5 69.1L2267.9 69.1L2267.9 79L2236 79Z M2239.6 73L2264.3 73L2264.3 75.8L2239.6 75.8Z"/>
<path d="M305.7 440.3L318.1 440.3L318.1 460.6L305.7 460.6M297.9 450.5L312 450.5M304.2 444.1L311.8 450.5L304.2 457.2" fill="none" stroke="#007398" stroke-width="2.2"/>
<path d="M438.8 441.9L438.8 455M432 448.6L438.8 455.2L445.5 448.6M427.8 453.9L427.8 459.8L449.9 459.8L449.9 453.9" fill="none" stroke="#007398" stroke-width="2.2"/>
<path d="M604.2 445L604.2 437.7L619.3 437.7L619.3 445M603.5 458.8L600.5 458.8Q597.5 458.8 597.5 455.8L597.5 448.2Q597.5 445.2 600.5 445.2L622.6 445.2Q625.6 445.2 625.6 448.2L625.6 455.8Q625.6 458.8 622.6 458.8L620 458.8M604.2 454.2L619.3 454.2L619.3 462.5L604.2 462.5Z" fill="none" stroke="#007398" stroke-width="2.2"/>
<circle cx="621.5" cy="449.7" r="1.2" fill="#007398"/>
<path d="M718.2 442.2L741.4 442.2L741.4 459.5L718.2 459.5ZM718.2 442.2L730 451.4L741.4 442.2M718.5 459.3L725.2 451.8M741.2 459.3L734.8 451.8" fill="none" stroke="#007398" stroke-width="2.2" stroke-linejoin="miter"/>
<path d="M850.5 438.6L871.9 438.6L871.9 456.3L864.5 462.9L851.6 462.9L851.6 451.5M861.6 459.8L861.6 453.5L868 453.5" fill="none" stroke="#007398" stroke-width="2.2"/>
<text x="850.7" y="448.8" font-family="Liberation Sans,sans-serif" font-weight="bold" font-size="8.8" fill="#007398" textLength="16.3" lengthAdjust="spacingAndGlyphs">PDF</text>
<path d="M1052.50 438.30L1056.03 446.45L1064.86 447.28L1058.21 453.15L1060.14 461.82L1052.50 457.30L1044.86 461.82L1046.79 453.15L1040.14 447.28L1048.97 446.45Z" fill="none" stroke="#007398" stroke-width="2.2" stroke-linejoin="miter"/>
<circle cx="635.3" cy="1260.5" r="11" fill="none" stroke="#0c7dbb" stroke-width="2.2"/><text x="635.3" y="1266.9" text-anchor="middle" font-family="Liberation Sans,sans-serif" font-weight="bold" font-size="17" fill="#0c7dbb">i</text>
<circle cx="805.7" cy="1382.7" r="11" fill="none" stroke="#0c7dbb" stroke-width="2.2"/><text x="805.7" y="1389.1000000000001" text-anchor="middle" font-family="Liberation Sans,sans-serif" font-weight="bold" font-size="17" fill="#0c7dbb">i</text>
<circle cx="2036.9" cy="407.6" r="11.1" fill="none" stroke="#007398" stroke-width="2.4"/>
<text x="0" y="413.7" text-anchor="middle" transform="translate(2036.9 0) scale(0.9 1)" font-family="Liberation Sans,sans-serif" font-weight="bold" font-size="18" fill="#007398">?</text>
<circle cx="1947.5" cy="537.3" r="4.5" fill="#6e1a62"/>
<path d="M1959.62 551.83C1952.09 542.83 1953.87 539.68 1951.17 534.70L1943.83 539.90C1947.63 544.10 1951.19 543.47 1957.18 553.57Z" fill="#6e1a62"/>
<circle cx="1969.5" cy="537.3" r="4.5" fill="#6e1a62"/>
<path d="M1959.62 553.58C1965.73 543.47 1969.31 544.10 1973.15 539.93L1965.85 534.67C1963.11 539.63 1964.84 542.83 1957.18 551.82Z" fill="#6e1a62"/>
<circle cx="1940.7" cy="558" r="4.7" fill="#6e1a62"/>
<path d="M1957.97 551.26C1947.27 555.46 1945.18 552.49 1939.35 553.50L1942.05 562.50C1947.47 560.14 1947.58 556.51 1958.83 554.14Z" fill="#6e1a62"/>
<circle cx="1976.4" cy="558" r="4.7" fill="#6e1a62"/>
<path d="M1957.98 554.14C1969.40 556.51 1969.64 560.17 1975.07 562.51L1977.73 553.49C1971.89 552.51 1969.72 555.46 1958.82 551.26Z" fill="#6e1a62"/>
<circle cx="1958.4" cy="571.1" r="4.5" fill="#6e1a62"/>
<path d="M1956.90 552.70C1957.85 564.11 1954.58 565.48 1953.90 571.10L1962.90 571.10C1962.23 565.48 1958.95 564.11 1959.90 552.70Z" fill="#6e1a62"/>
<circle cx="1958.4" cy="552.7" r="3.2" fill="#6e1a62"/></svg>
<span class="t" style="left:137.17px;top:48.00px;font-size:37px;color:#f36d21;transform:scaleX(0.9167);">Scopus</span>
<span class="t" style="left:1429.18px;top:48.00px;font-size:30.5px;color:#505359;transform:scaleX(0.9086);">Search</span>
<span class="t" style="left:1555.17px;top:48.00px;font-size:30.5px;color:#505359;transform:scaleX(0.9151);">Sources</span>
<span class="t" style="left:1696.25px;top:48.00px;font-size:30.5px;color:#505359;letter-spacing:-0.938px;">Lists</span>
<span class="t" style="left:1793.16px;top:48.00px;font-size:30.5px;color:#505359;transform:scaleX(0.9219);">SciVal</span>
<span class="t" style="left:2325.70px;top:42.00px;font-size:29px;color:#2e2e2e;letter-spacing:-0.633px;">Create account</span>
<span class="t" style="left:242.00px;top:171.00px;font-size:71px;color:#505050;letter-spacing:-0.483px;-webkit-text-stroke:1.1px #fff;">Document details</span>
<span class="t" style="left:311.75px;top:368.00px;font-size:24px;color:#007398;letter-spacing:-0.357px;">Back to results</span>
<span class="t" style="left:515.00px;top:368.00px;font-size:24px;color:#007398;letter-spacing:-0.714px;">Previous</span>
<span class="t" style="left:635.25px;top:368.00px;font-size:24px;color:#2e2e2e;">2</span>
<span class="t" style="left:661.50px;top:368.00px;font-size:24px;color:#2e2e2e;letter-spacing:2.250px;">of</span>
<span class="t" style="left:694.33px;top:368.00px;font-size:24px;color:#2e2e2e;transform:scaleX(0.9583);">16</span>
<span class="t" style="left:752.00px;top:368.00px;font-size:24px;color:#007398;">Next</span>
<span class="t" style="left:326.00px;top:436.00px;font-size:24px;color:#007398;letter-spacing:-0.200px;">Export</span>
<span class="t" style="left:457.50px;top:436.00px;font-size:24px;color:#007398;letter-spacing:0.071px;">Download</span>
<span class="t" style="left:633.75px;top:436.00px;font-size:24px;color:#007398;letter-spacing:0.438px;">Print</span>
<span class="t" style="left:749.00px;top:436.00px;font-size:24px;color:#007398;letter-spacing:0.200px;">E-mail</span>
<span class="t" style="left:880.07px;top:436.00px;font-size:24px;color:#007398;transform:scaleX(0.9254);">Save to PDF</span>
<span class="t" style="left:1075.75px;top:436.00px;font-size:24px;color:#007398;letter-spacing:-0.125px;">Add to List</span>
<span class="t" style="left:1219.00px;top:436.00px;font-size:24px;color:#007398;letter-spacing:0.292px;">More...</span>
<span class="t" style="left:294.25px;top:533.00px;font-size:24px;color:#007398;letter-spacing:-0.679px;">E3S Web of Conferences</span>
<span class="t" style="left:295.40px;top:564.00px;font-size:24px;color:#2e2e2e;letter-spacing:-0.473px;">Volume 231, 25 January 2021, 93p</span>
<span class="t" style="left:304.05px;top:597.00px;font-size:24px;color:#2e2e2e;transform:scaleX(0.9471);">2020</span>
<span class="t" style="left:371.50px;top:597.00px;font-size:24px;color:#2e2e2e;letter-spacing:0.175px;">2nd International</span>
<span class="t" style="left:559.50px;top:597.00px;font-size:24px;color:#2e2e2e;letter-spacing:-0.292px;">Conference on</span>
<span class="t" style="left:719.25px;top:597.00px;font-size:24px;color:#2e2e2e;letter-spacing:-0.434px;">Power, Energy and</span>
<span class="t" style="left:920.50px;top:597.00px;font-size:24px;color:#2e2e2e;letter-spacing:-0.222px;">Electrical</span>
<span class="t" style="left:1021.75px;top:597.00px;font-size:24px;color:#2e2e2e;letter-spacing:-0.014px;">Engineering,</span>
<span class="t" style="left:1171.65px;top:597.00px;font-size:24px;color:#2e2e2e;transform:scaleX(0.8754);">PEEE</span>
<span class="t" style="left:1253.55px;top:597.00px;font-size:24px;color:#2e2e2e;transform:scaleX(0.9481);">2020</span>
<span class="t" style="left:1313.50px;top:597.00px;font-size:24px;color:#2e2e2e;letter-spacing:-0.225px;">; Copenhagen;</span>
<span class="t" style="left:1473.00px;top:597.00px;font-size:24px;color:#2e2e2e;letter-spacing:0.114px;">Denmark;</span>
<span class="t" style="left:294.50px;top:629.00px;font-size:24px;color:#2e2e2e;letter-spacing:-0.361px;">4 December</span>
<span class="t" style="left:437.80px;top:629.00px;font-size:24px;color:#2e2e2e;transform:scaleX(0.9471);">2020</span>
<span class="t" style="left:505.50px;top:629.00px;font-size:24px;color:#2e2e2e;letter-spacing:-0.059px;">through 6 December</span>
<span class="t" style="left:739.05px;top:629.00px;font-size:24px;color:#2e2e2e;transform:scaleX(0.9471);">2020</span>
<span class="t" style="left:799.75px;top:629.00px;font-size:24px;color:#2e2e2e;letter-spacing:-0.529px;">; Code 166766</span>
<span class="t" style="left:303.70px;top:684.00px;font-size:34px;color:#2e2e2e;letter-spacing:0.533px;">2020</span>
<span class="t" style="left:399.70px;top:684.00px;font-size:34px;color:#2e2e2e;letter-spacing:1.159px;">2nd International</span>
<span class="t" style="left:681.75px;top:684.00px;font-size:34px;color:#2e2e2e;letter-spacing:0.646px;">Conference on</span>
<span class="t" style="left:922.00px;top:684.00px;font-size:34px;color:#2e2e2e;letter-spacing:0.375px;">Power, Energy and</span>
<span class="t" style="left:1224.50px;top:684.00px;font-size:34px;color:#2e2e2e;letter-spacing:0.417px;">Electrical</span>
<span class="t" style="left:1375.75px;top:684.00px;font-size:34px;color:#2e2e2e;letter-spacing:1.114px;">Engineering,</span>
<span class="t" style="left:1596.23px;top:684.00px;font-size:34px;color:#2e2e2e;transform:scaleX(0.9221);">PEEE</span>
<span class="t" style="left:1708.00px;top:684.00px;font-size:34px;color:#2e2e2e;letter-spacing:0.767px;">2020</span>
<span class="t" style="left:319.00px;top:736.00px;font-size:24px;color:#737373;letter-spacing:-0.628px;">(Conference Review)</span>
<span class="t" style="left:293.70px;top:786.00px;font-size:24px;color:#2e2e2e;letter-spacing:-0.120px;">[No author name available]</span>
<span class="t" style="left:295.00px;top:872.00px;font-size:29px;color:#2e2e2e;letter-spacing:-0.243px;">Abstract</span>
<span class="t" style="left:294.70px;top:928.00px;font-size:24px;color:#2e2e2e;letter-spacing:-0.256px;">The proceedings contain 17</span>
<span class="t" style="left:590.50px;top:928.00px;font-size:24px;color:#2e2e2e;letter-spacing:-0.600px;">papers. The topics discussed</span>
<span class="t" style="left:890.50px;top:928.00px;font-size:24px;color:#2e2e2e;letter-spacing:0.032px;">include: optimal energy allocation</span>
<span class="t" style="left:1252.75px;top:928.00px;font-size:24px;color:#2e2e2e;letter-spacing:0.162px;">algorithm of Li-battery/super</span>
<span class="t" style="left:1563.50px;top:928.00px;font-size:24px;color:#2e2e2e;letter-spacing:-0.223px;">capacitor hybrid energy</span>
<span class="t" style="left:294.70px;top:966.00px;font-size:24px;color:#2e2e2e;letter-spacing:-0.586px;">storage system based on</span>
<span class="t" style="left:557.00px;top:966.00px;font-size:24px;color:#2e2e2e;letter-spacing:0.267px;">dynamic programming</span>
<span class="t" style="left:806.00px;top:966.00px;font-size:24px;color:#2e2e2e;letter-spacing:-0.134px;">algorithm; research and</span>
<span class="t" style="left:1061.25px;top:966.00px;font-size:24px;color:#2e2e2e;letter-spacing:0.169px;">mathematic simulation of the</span>
<span class="t" style="left:1378.00px;top:966.00px;font-size:24px;color:#2e2e2e;letter-spacing:0.253px;">pollution particle</span>
<span class="t" style="left:1561.50px;top:966.00px;font-size:24px;color:#2e2e2e;letter-spacing:0.188px;">motion process in the fluid</span>
<span class="t" style="left:294.70px;top:1004.00px;font-size:24px;color:#2e2e2e;letter-spacing:-0.067px;">stream under effluents</span>
<span class="t" style="left:539.50px;top:1004.00px;font-size:24px;color:#2e2e2e;letter-spacing:-0.188px;">treatment; brutalism: as a</span>
<span class="t" style="left:813.00px;top:1004.00px;font-size:24px;color:#2e2e2e;letter-spacing:-0.178px;">preferred style for</span>
<span class="t" style="left:1005.00px;top:1004.00px;font-size:24px;color:#2e2e2e;letter-spacing:0.452px;">institutional buildings in</span>
<span class="t" style="left:1268.50px;top:1004.00px;font-size:24px;color:#2e2e2e;letter-spacing:0.072px;">modern architecture</span>
<span class="t" style="left:1489.00px;top:1004.00px;font-size:24px;color:#2e2e2e;letter-spacing:-0.020px;">period; virtual power</span>
<span class="t" style="left:1711.80px;top:1004.00px;font-size:24px;color:#2e2e2e;letter-spacing:0.071px;">plant: state of</span>
<span class="t" style="left:295.70px;top:1042.00px;font-size:24px;color:#2e2e2e;letter-spacing:-0.115px;">the art providing energy</span>
<span class="t" style="left:554.25px;top:1042.00px;font-size:24px;color:#2e2e2e;letter-spacing:0.166px;">flexibility to local distribution</span>
<span class="t" style="left:862.75px;top:1042.00px;font-size:24px;color:#2e2e2e;letter-spacing:-0.117px;">grids; enhancing power</span>
<span class="t" style="left:1115.50px;top:1042.00px;font-size:24px;color:#2e2e2e;letter-spacing:-0.094px;">loss by optimal coordinated</span>
<span class="t" style="left:1410.33px;top:1042.00px;font-size:24px;color:#2e2e2e;transform:scaleX(0.9212);">extensive CS</span>
<span class="t" style="left:1547.50px;top:1042.00px;font-size:24px;color:#2e2e2e;letter-spacing:0.163px;">operation during off-peak</span>
<span class="t" style="left:293.70px;top:1080.00px;font-size:24px;color:#2e2e2e;letter-spacing:0.178px;">load at the distribution</span>
<span class="t" style="left:539.00px;top:1080.00px;font-size:24px;color:#2e2e2e;letter-spacing:-0.236px;">system; why should the</span>
<span class="t" style="left:790.25px;top:1080.00px;font-size:24px;color:#2e2e2e;letter-spacing:-0.188px;">automated guided vehicles’</span>
<span class="t" style="left:1081.75px;top:1080.00px;font-size:24px;color:#2e2e2e;letter-spacing:-0.270px;">batteries be used in the</span>
<span class="t" style="left:1331.75px;top:1080.00px;font-size:24px;color:#2e2e2e;letter-spacing:0.082px;">manufacturing plants</span>
<span class="t" style="left:1563.50px;top:1080.00px;font-size:24px;color:#2e2e2e;letter-spacing:-0.576px;">as an energy storage?;</span>
<span class="t" style="left:295.70px;top:1118.00px;font-size:24px;color:#2e2e2e;letter-spacing:-0.363px;">techno-economic assessment of</span>
<span class="t" style="left:636.75px;top:1118.00px;font-size:24px;color:#2e2e2e;letter-spacing:-0.290px;">hydrogen usage in a smart</span>
<span class="t" style="left:922.00px;top:1118.00px;font-size:24px;color:#2e2e2e;letter-spacing:-0.094px;">grid, employing a staggered</span>
<span class="t" style="left:1222.75px;top:1118.00px;font-size:24px;color:#2e2e2e;letter-spacing:0.380px;">optimization algorithm;</span>
<span class="t" style="left:1477.30px;top:1118.00px;font-size:24px;color:#2e2e2e;letter-spacing:-0.158px;">and research on the control</span>
<span class="t" style="left:295.70px;top:1155.00px;font-size:24px;color:#2e2e2e;letter-spacing:-0.212px;">technology of self-synchronous</span>
<span class="t" style="left:628.75px;top:1155.00px;font-size:24px;color:#2e2e2e;letter-spacing:-0.267px;">voltage source inverter for</span>
<span class="t" style="left:907.00px;top:1155.00px;font-size:24px;color:#2e2e2e;letter-spacing:-0.037px;">distributed parallel system.</span>
<span class="t" style="left:294.70px;top:1243.00px;font-size:29px;color:#2e2e2e;letter-spacing:0.027px;">SciVal Topic Prominence</span>
<span class="t" style="left:294.70px;top:1308.00px;font-size:24px;color:#2e2e2e;letter-spacing:0.060px;">Topic:</span>
<span class="t" style="left:375.70px;top:1308.00px;font-size:24px;color:#007398;letter-spacing:-0.429px;">Compressed Air Energy Storage</span>
<span class="t" style="left:725.70px;top:1308.00px;font-size:24px;color:#007398;letter-spacing:-0.244px;">Electricity Storage</span>
<span class="t" style="left:933.30px;top:1308.00px;font-size:24px;color:#007398;letter-spacing:-0.037px;">Arbitrage</span>
<span class="t" style="left:293.70px;top:1369.00px;font-size:24px;color:#2e2e2e;letter-spacing:-0.033px;">Prominence percentile:</span>
<span class="t" style="left:569.00px;top:1369.00px;font-size:24px;color:#2e2e2e;letter-spacing:-0.660px;">99.903</span>
<span class="t" style="left:293.50px;top:1482.00px;font-size:24px;color:#2e2e2e;letter-spacing:-0.750px;font-weight:bold;">ISSN:</span>
<span class="t" style="left:359.00px;top:1482.00px;font-size:24px;color:#2e2e2e;letter-spacing:-0.536px;">25550403</span>
<span class="t" style="left:294.62px;top:1514.00px;font-size:24px;color:#2e2e2e;font-weight:bold;transform:scaleX(0.8810);">Source Type:</span>
<span class="t" style="left:432.00px;top:1514.00px;font-size:24px;color:#2e2e2e;letter-spacing:-0.362px;">Conference Proceeding</span>
<span class="t" style="left:294.57px;top:1546.00px;font-size:24px;color:#2e2e2e;font-weight:bold;transform:scaleX(0.9291);">Original language:</span>
<span class="t" style="left:496.25px;top:1546.00px;font-size:24px;color:#2e2e2e;letter-spacing:-0.042px;">English</span>
<span class="t" style="left:957.34px;top:1482.00px;font-size:24px;color:#2e2e2e;font-weight:bold;transform:scaleX(0.9302);">Document Type:</span>
<span class="t" style="left:1135.40px;top:1482.00px;font-size:24px;color:#2e2e2e;letter-spacing:-0.700px;">Conference Review</span>
<span class="t" style="left:959.20px;top:1514.00px;font-size:24px;color:#2e2e2e;font-weight:bold;transform:scaleX(0.9211);">Volume Editors:</span>
<span class="t" style="left:1131.70px;top:1514.00px;font-size:24px;color:#2e2e2e;letter-spacing:0.167px;">Malik O.P.</span>
<span class="t" style="left:957.39px;top:1546.00px;font-size:24px;color:#2e2e2e;font-weight:bold;transform:scaleX(0.9044);">Publisher:</span>
<span class="t" style="left:1068.96px;top:1546.00px;font-size:24px;color:#2e2e2e;transform:scaleX(0.9213);">EDP Sciences</span>
<span class="t" style="left:1907.20px;top:390.00px;font-size:29px;color:#2e2e2e;letter-spacing:0.667px;">Metrics</span>
<span class="t" style="left:2187.80px;top:394.00px;font-size:24px;color:#007398;letter-spacing:-0.173px;">View all metrics</span>
<span class="t" style="left:2008.80px;top:512.00px;font-size:24px;color:#2e2e2e;letter-spacing:0.125px;">PlumX Metrics</span>
<span class="t" style="left:2008.96px;top:557.00px;font-size:20.5px;color:#2e2e2e;transform:scaleX(0.9224);">Usage, Captures, Mentions,</span>
<span class="t" style="left:2009.88px;top:588.00px;font-size:20.5px;color:#2e2e2e;transform:scaleX(0.9178);">Social Media and Citations</span>
<span class="t" style="left:2009.90px;top:620.00px;font-size:20.5px;color:#2e2e2e;transform:scaleX(0.8986);">beyond Scopus.</span>
<span class="t" style="left:1907.70px;top:755.00px;font-size:29px;color:#2e2e2e;letter-spacing:0.253px;">Cited by 0 documents</span>
<span class="t" style="left:1906.70px;top:841.00px;font-size:24px;color:#2e2e2e;letter-spacing:0.174px;">Inform me when this document is cited in</span>
<span class="t" style="left:1907.76px;top:874.00px;font-size:24px;color:#2e2e2e;transform:scaleX(0.9357);">Scopus:</span>
<span class="t" style="left:1923.50px;top:949.00px;font-size:21px;color:#2e2e2e;letter-spacing:-0.147px;">Set citation alert</span>
</body></html>
